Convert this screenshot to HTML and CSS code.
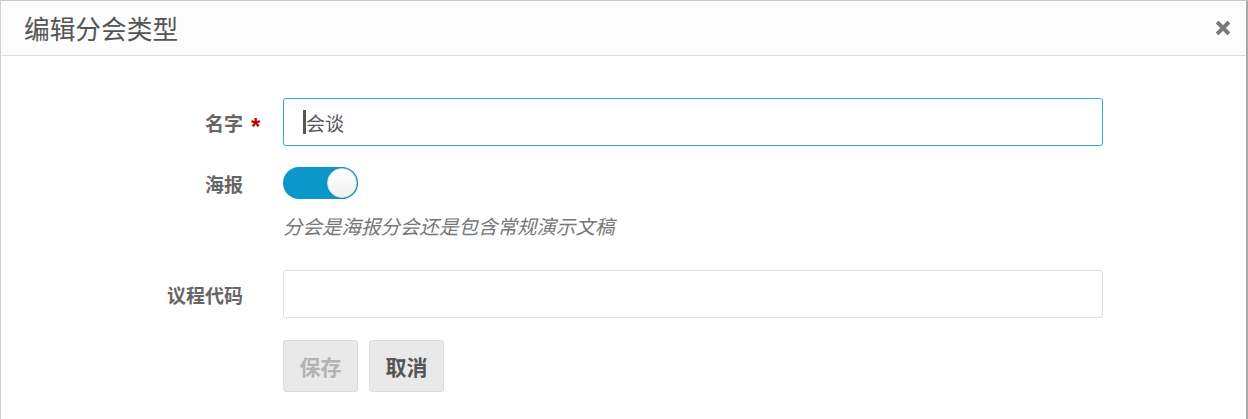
FILE: index.html
```html
<!DOCTYPE html>
<html lang="zh-CN">
<head>
<meta charset="utf-8">
<title>编辑分会类型</title>
<link rel="stylesheet" href="styles.css">
</head>
<body>
<div class="modal">
  <div class="modal-header">
    <h1 class="modal-title">编辑分会类型</h1>
    <button class="close" aria-label="关闭">
      <svg width="14" height="14" viewBox="0 0 14 14"><path d="M2.5 2.5 L11.5 11.5 M11.5 2.5 L2.5 11.5" stroke="#7a7a7a" stroke-width="4" stroke-linecap="square" fill="none"/></svg>
    </button>
  </div>
  <div class="modal-body">
    <div class="form-row">
      <label class="form-label required">名字<span class="star">*</span></label>
      <div class="form-field">
        <div class="input focused"><span class="caret"></span>会谈</div>
      </div>
    </div>
    <div class="form-row row-toggle">
      <label class="form-label">海报</label>
      <div class="form-field">
        <div class="toggle on"><span class="knob"></span></div>
        <div class="help">分会是海报分会还是包含常规演示文稿</div>
      </div>
    </div>
    <div class="form-row row-code">
      <label class="form-label">议程代码</label>
      <div class="form-field">
        <div class="input"></div>
      </div>
    </div>
    <div class="form-row row-actions">
      <div></div>
      <div class="form-field actions">
        <button class="btn disabled">保存</button>
        <button class="btn">取消</button>
      </div>
    </div>
  </div>
</div>
</body>
</html>
```

FILE: styles.css
```css
html, body {
  margin: 0;
  padding: 0;
  background: #fff;
}
body {
  font-family: "Noto Sans CJK SC", "Noto Sans", sans-serif;
  overflow: hidden;
}
.modal {
  box-sizing: border-box;
  width: 1248px;
  min-height: 430px;
  border-top: 1px solid #c8c8c8;
  border-left: 1px solid #d0d0d0;
  border-right: 2px solid #ababab;
  background: #fff;
}
.modal-header {
  display: flex;
  align-items: center;
  justify-content: space-between;
  height: 54px;
  padding: 0 16px 0 23px;
  background: #fcfcfc;
  border-bottom: 1px solid #dcdcdc;
}
.modal-title {
  margin: 0;
  font-size: 25.7px;
  font-weight: 400;
  color: #555;
  line-height: 54px;
}
.close {
  border: 0;
  background: none;
  padding: 0;
  width: 14px;
  height: 14px;
  display: flex;
}
.modal-body {
  padding-top: 42px;
}
.form-row {
  display: grid;
  grid-template-columns: 282px 820px;
}
.form-label {
  display: flex;
  align-items: center;
  justify-content: flex-end;
  padding-right: 40px;
  font-size: 19px;
  font-weight: 700;
  color: #666;
  height: 48px;
}
.form-label.required {
  padding-right: 22px;
}
.star {
  width: 10px;
  margin-left: 8px;
  color: #b80000;
  font-family: "Liberation Sans", sans-serif;
  font-size: 24px;
  font-weight: 700;
  line-height: 1;
  padding-top: 10px;
}
.input {
  box-sizing: border-box;
  height: 48px;
  border: 1px solid #ddd;
  border-radius: 3px;
  background: #fff;
  display: flex;
  align-items: center;
  padding-left: 19px;
  font-size: 19px;
  color: #555;
}
.input.focused {
  border-color: #33a9d3;
}
.caret {
  display: inline-block;
  width: 3px;
  height: 24px;
  background: #555;
}
.row-toggle {
  margin-top: 21px;
}
.row-toggle .form-label {
  height: 32px;
  align-items: center;
}
.toggle {
  box-sizing: border-box;
  width: 75px;
  height: 32px;
  border-radius: 16px;
  background: #0b98c9;
  display: flex;
  align-items: center;
  justify-content: flex-end;
  padding-right: 1px;
}
.knob {
  box-sizing: border-box;
  width: 30px;
  height: 30px;
  border-radius: 50%;
  background: linear-gradient(#fff, #f1f1f1);
  border: 1px solid #dedede;
  box-shadow: 1px 1px 3px rgba(0,0,0,0.15);
}
.help {
  margin-top: 13px;
  line-height: 27px;
  font-size: 19.5px;
  font-style: italic;
  color: #777;
}
.row-code {
  margin-top: 31px;
}
.row-actions {
  margin-top: 22px;
}
.actions {
  display: flex;
  gap: 11px;
}
.btn {
  box-sizing: border-box;
  width: 75px;
  height: 52px;
  border: 1px solid #dcdcdc;
  border-radius: 3px;
  background: #e9e9e9;
  font-family: "Noto Sans CJK SC", sans-serif;
  font-size: 21px;
  font-weight: 700;
  color: #555;
  padding: 0;
}
.btn.disabled {
  color: #b3b3b3;
}
```
